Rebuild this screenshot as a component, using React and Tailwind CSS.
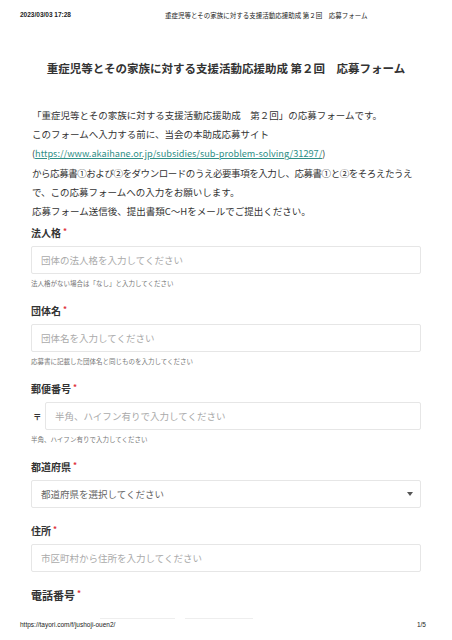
import React from 'react'

const jp = { fontFamily: '"Noto Sans CJK JP", "Noto Sans", sans-serif' }

function Label({ children, big }) {
  return (
    <div className={`flex items-start font-bold text-[#333] ${big ? 'text-[11px] leading-[14px]' : 'text-[10px] leading-[14px]'}`}>
      <span>{children}</span>
      <span className="text-[#e0303a] text-[8px] leading-[8px] ml-[2px] mt-[1px]">*</span>
    </div>
  )
}

function Box({ placeholder, select }) {
  return (
    <div className="h-[28px] border border-[#e6e6e6] rounded-[2px] flex items-center justify-between pl-[9px] pr-[7px] flex-1">
      <span className={`text-[9.5px] ${select ? 'text-[#666]' : 'text-[#aaa]'}`}>{placeholder}</span>
      {select && (
        <svg width="6" height="4" viewBox="0 0 6 4">
          <path d="M0 0h6L3 4z" fill="#555" />
        </svg>
      )}
    </div>
  )
}

function Field({ label, placeholder, help, select, postal }) {
  return (
    <div className="mb-[16px]">
      <Label>{label}</Label>
      <div className="mt-[6px] flex items-center">
        {postal && <span className="text-[8.5px] font-bold text-[#333] w-[14px] pl-[2px]">〒</span>}
        <Box placeholder={placeholder} select={select} />
      </div>
      {help && <p className="mt-[4px] text-[6.5px] leading-[10px] text-[#777]">{help}</p>}
    </div>
  )
}

export default function App() {
  return (
    <div className="w-[452px] h-[640px] bg-white flex flex-col overflow-hidden" style={jp}>
      <header className="flex h-[30px] pt-[11px] px-[20px] text-[6.5px] leading-[8px] text-[#222]">
        <span className="w-[145px] font-bold" style={{ fontFamily: '"Liberation Sans", sans-serif' }}>2023/03/03 17:28</span>
        <span>重症児等とその家族に対する支援活動応援助成 第２回　応募フォーム</span>
      </header>

      <main className="flex-1 px-[31px]">
        <h1 className="mt-[30px] text-center text-[11.5px] leading-[16px] font-bold text-[#333]">
          重症児等とその家族に対する支援活動応援助成 第２回　応募フォーム
        </h1>

        <div className="mt-[30px] text-[9.5px] leading-[19.2px] text-[#333] pl-[1px] whitespace-nowrap">
          <p>「重症児等とその家族に対する支援活動応援助成　第２回」の応募フォームです。</p>
          <p>このフォームへ入力する前に、当会の本助成応募サイト</p>
          <p className="text-[9.2px]">
            (<span className="text-[#2f8f86] underline">https://www.akaihane.or.jp/subsidies/sub-problem-solving/31297/</span>)
          </p>
          <p className="tracking-[-0.45px]">から応募書①および②をダウンロードのうえ必要事項を入力し、応募書①と②をそろえたうえ</p>
          <p>で、この応募フォームへの入力をお願いします。</p>
          <p>応募フォーム送信後、提出書類C〜Hをメールでご提出ください。</p>
        </div>

        <div className="mt-[5px]">
          <Field label="法人格" placeholder="団体の法人格を入力してください" help="法人格がない場合は「なし」と入力してください" />
          <Field label="団体名" placeholder="団体名を入力してください" help="応募書に記載した団体名と同じものを入力してください" />
          <Field label="郵便番号" postal placeholder="半角、ハイフン有りで入力してください" help="半角、ハイフン有りで入力してください" />
          <Field label="都道府県" select placeholder="都道府県を選択してください" />
          <Field label="住所" placeholder="市区町村から住所を入力してください" />
          <Label big>電話番号</Label>
        </div>
      </main>

      <div className="flex gap-[10px] pl-[100px] h-[1px]">
        <div className="w-[75px] border-t border-[#eee]" />
        <div className="w-[68px] border-t border-[#eee]" />
      </div>
      <footer className="flex justify-between px-[20px] pt-[2px] pb-[11px] text-[6.5px] leading-[8px] text-[#222]" style={{ fontFamily: '"Liberation Sans", sans-serif' }}>
        <span>https://tayori.com/f/jushoji-ouen2/</span>
        <span className="pr-[6px]">1/5</span>
      </footer>
    </div>
  )
}
